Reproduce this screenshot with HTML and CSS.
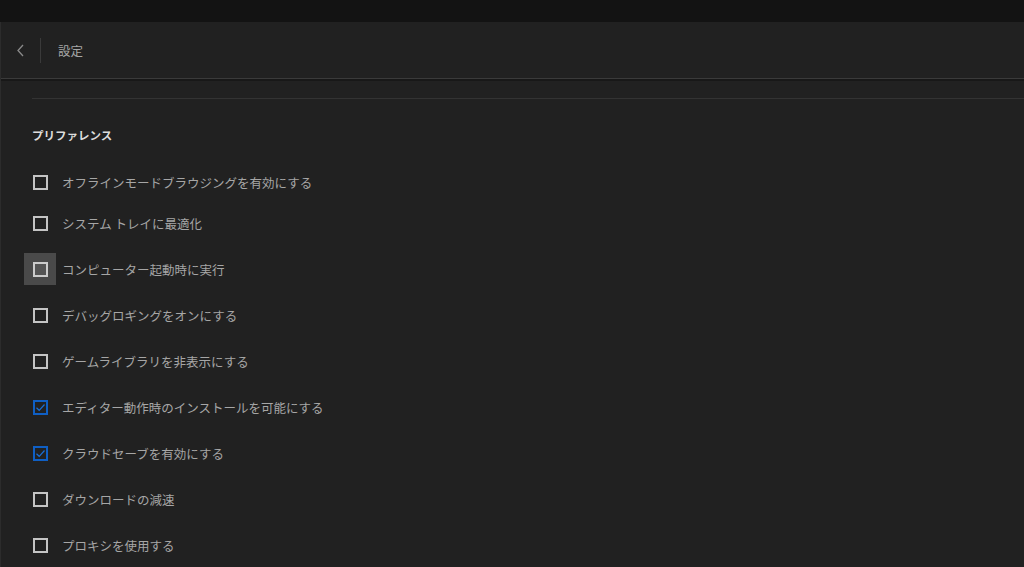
FILE: index.html
```html
<!DOCTYPE html>
<html lang="ja">
<head>
  <meta charset="UTF-8" />
  <meta name="viewport" content="width=device-width, initial-scale=1.0"/>
  <title>設定</title>
  <link rel="stylesheet" href="styles.css">
</head>
<body>
  <div class="window">
    <header class="top-bar">
      <button class="back-button" aria-label="戻る">
        <svg width="9" height="13" viewBox="0 0 9 13"><path d="M7 1 L2 6.5 L7 12" fill="none" stroke="#8a8a8a" stroke-width="1.3"/></svg>
      </button>
      <span class="top-sep"></span>
      <span class="top-title">設定</span>
    </header>

    <main class="content">
      <hr class="divider">
      <h2 class="section-title">プリファレンス</h2>

      <ul class="options">
        <li class="option"><span class="box-wrap"><span class="box"></span></span><span class="label">オフラインモードブラウジングを有効にする</span></li>
        <li class="option"><span class="box-wrap"><span class="box"></span></span><span class="label">システム トレイに最適化</span></li>
        <li class="option hover"><span class="box-wrap"><span class="box"></span></span><span class="label">コンピューター起動時に実行</span></li>
        <li class="option"><span class="box-wrap"><span class="box"></span></span><span class="label">デバッグロギングをオンにする</span></li>
        <li class="option"><span class="box-wrap"><span class="box"></span></span><span class="label">ゲームライブラリを非表示にする</span></li>
        <li class="option checked"><span class="box-wrap"><span class="box"><svg width="11" height="11" viewBox="0 0 11 11"><path d="M1.5 5.8 L4.2 8.3 L9.5 2.5" fill="none" stroke="#1a6fd6" stroke-width="1.2"/></svg></span></span><span class="label">エディター動作時のインストールを可能にする</span></li>
        <li class="option checked"><span class="box-wrap"><span class="box"><svg width="11" height="11" viewBox="0 0 11 11"><path d="M1.5 5.8 L4.2 8.3 L9.5 2.5" fill="none" stroke="#1a6fd6" stroke-width="1.2"/></svg></span></span><span class="label">クラウドセーブを有効にする</span></li>
        <li class="option"><span class="box-wrap"><span class="box"></span></span><span class="label">ダウンロードの減速</span></li>
        <li class="option"><span class="box-wrap"><span class="box"></span></span><span class="label">プロキシを使用する</span></li>
      </ul>
    </main>
  </div>
</body>
</html>
```

FILE: styles.css
```css
* {
  box-sizing: border-box;
}
html, body {
  height: 100%;
}
body {
  margin: 0;
  background: #131313;
  font-family: "Noto Sans CJK JP", "Noto Sans", sans-serif;
  color: #a9a9a9;
  overflow: hidden;
}

.window {
  margin-top: 22px;
  height: calc(100% - 22px);
  background: #212121;
  border-left: 1px solid #2c2c2c;
}

.top-bar {
  height: 57px;
  display: flex;
  align-items: center;
  border-bottom: 1px solid #3a3a3a;
  box-shadow: 0 2px 0 #181818;
}

.back-button {
  width: 39px;
  height: 100%;
  padding: 0 0 0 15px;
  background: none;
  border: none;
  display: flex;
  align-items: center;
}

.top-sep {
  width: 1px;
  height: 25px;
  background: #3a3a3a;
}

.top-title {
  margin-left: 17px;
  font-size: 12.5px;
  color: #a6a6a6;
}

.content {
  padding: 19px 0 0 31px;
}

.divider {
  margin: 0;
  border: none;
  border-top: 1px solid #333333;
}

.section-title {
  margin: 28px 0 0;
  font-size: 11.5px;
  font-weight: bold;
  color: #dcdcdc;
  line-height: 16px;
}

.options {
  list-style: none;
  margin: 21px 0 0;
  padding: 0;
}

.option {
  height: 46px;
  display: flex;
  align-items: center;
}
.option:first-child {
  height: 36px;
}

.box-wrap {
  width: 32px;
  height: 32px;
  margin-left: -8px;
  display: flex;
  align-items: center;
  justify-content: center;
}

.box {
  width: 15px;
  height: 15px;
  border: 2px solid #c4c4c4;
  display: flex;
  align-items: center;
  justify-content: center;
}

.option.hover .box-wrap {
  background: #4a4a4a;
}
.option.hover .box {
  background: #555555;
  border-color: #cccccc;
}

.option.checked .box {
  border-color: #0f5fc4;
}

.label {
  margin-left: 6px;
  font-size: 12.5px;
  color: #a6a6a6;
}
```
